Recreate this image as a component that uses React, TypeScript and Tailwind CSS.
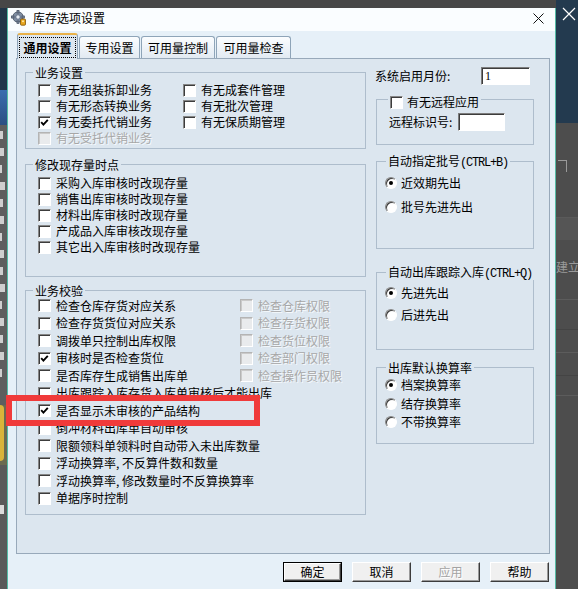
import React from 'react';

type Item = { label: React.ReactNode; key: string; checked?: boolean; disabled?: boolean };

// SimSun-style half-width comma
const Comma = () => <span className="inline-block w-[6px]">,</span>;

const BIZ_LEFT: Item[] = [
  { key: 'a1', label: '有无组装拆卸业务' },
  { key: 'a2', label: '有无形态转换业务' },
  { key: 'a3', label: '有无委托代销业务', checked: true },
  { key: 'a4', label: '有无受托代销业务', disabled: true },
];

const BIZ_RIGHT: Item[] = [
  { key: 'b1', label: '有无成套件管理' },
  { key: 'b2', label: '有无批次管理' },
  { key: 'b3', label: '有无保质期管理' },
];

const STOCK_POINTS: Item[] = [
  { key: 'c1', label: '采购入库审核时改现存量' },
  { key: 'c2', label: '销售出库审核时改现存量' },
  { key: 'c3', label: '材料出库审核时改现存量' },
  { key: 'c4', label: '产成品入库审核改现存量' },
  { key: 'c5', label: '其它出入库审核时改现存量' },
];

const CHECKS: [Item, Item | null][] = [
  [{ key: 'd1', label: '检查仓库存货对应关系' }, { key: 'e1', label: '检查仓库权限', disabled: true }],
  [{ key: 'd2', label: '检查存货货位对应关系' }, { key: 'e2', label: '检查存货权限', disabled: true }],
  [{ key: 'd3', label: '调拨单只控制出库权限' }, { key: 'e3', label: '检查货位权限', disabled: true }],
  [{ key: 'd4', label: '审核时是否检查货位', checked: true }, { key: 'e4', label: '检查部门权限', disabled: true }],
  [{ key: 'd5', label: '是否库存生成销售出库单' }, { key: 'e5', label: '检查操作员权限', disabled: true }],
  [{ key: 'd6', label: '出库跟踪入库存货入库单审核后才能出库' }, null],
  [{ key: 'd7', label: '是否显示未审核的产品结构', checked: true }, null],
  [{ key: 'd8', label: '倒冲材料出库单自动审核' }, null],
  [{ key: 'd9', label: '限额领料单领料时自动带入未出库数量' }, null],
  [{ key: 'd10', label: <>浮动换算率<Comma />不反算件数和数量</> }, null],
  [{ key: 'd11', label: <>浮动换算率<Comma />修改数量时不反算换算率</> }, null],
  [{ key: 'd12', label: '单据序时控制' }, null],
];

const Check = ({ checked = false, disabled = false }: { checked?: boolean; disabled?: boolean }) => (
  <span
    className={`flex h-[13px] w-[13px] shrink-0 items-center justify-center border border-r-white border-b-white ${
      disabled
        ? 'border-t-[#b4b4b4] border-l-[#b4b4b4] bg-[#e9ebed] shadow-[inset_1px_1px_0_#cacaca]'
        : 'border-t-[#868686] border-l-[#868686] bg-white shadow-[inset_1px_1px_0_#3c3c3c]'
    }`}
  >
    {checked && (
      <svg width="9" height="9" viewBox="0 0 9 9">
        <path d="M1.2 4.2 L3.4 6.6 L7.8 1.8" stroke="#000" strokeWidth="1.9" fill="none" />
      </svg>
    )}
  </span>
);

const Radio = ({ on = false }: { on?: boolean }) => (
  <span className="flex h-[12px] w-[12px] shrink-0 items-center justify-center rounded-full border border-t-[#868686] border-l-[#868686] border-r-white border-b-white bg-white shadow-[inset_1px_1px_0_#3c3c3c]">
    {on && <span className="h-[4px] w-[4px] rounded-full bg-black" />}
  </span>
);

const CheckRow = ({ item, h }: { item: Item; h: string }) => (
  <div className={`flex items-center gap-[5px] whitespace-nowrap ${h}`}>
    <Check checked={item.checked} disabled={item.disabled} />
    <span className={item.disabled ? 'text-[#a7a7a7] [text-shadow:1px_1px_0_#f6f9fc]' : ''}>{item.label}</span>
  </div>
);

const RadioRow = ({ label, on, h }: { label: string; on?: boolean; h: string }) => (
  <div className={`flex items-center gap-[4px] whitespace-nowrap ${h}`}>
    <Radio on={on} />
    <span>{label}</span>
  </div>
);

const Group = ({
  title,
  className,
  titleClass,
  children,
}: {
  title: React.ReactNode;
  className: string;
  titleClass: string;
  children: React.ReactNode;
}) => (
  <div className={`flex flex-col border border-[#aebdcc] ${className}`}>
    <div className={`flex h-[14px] w-fit items-center whitespace-nowrap bg-[#dce6ef] px-[2px] ${titleClass}`}>
      {title}
    </div>
    {children}
  </div>
);

const Hotkey = ({ k }: { k: string }) => (
  <span className="font-['Liberation_Mono',monospace] text-[12px] tracking-[-1.2px]">(CTRL+{k})</span>
);

const Sunken = ({ className, children }: { className: string; children?: React.ReactNode }) => (
  <div
    className={`flex items-center border border-t-[#7c7c7c] border-l-[#7c7c7c] border-r-white border-b-white bg-white shadow-[inset_1px_1px_0_#3c3c3c] ${className}`}
  >
    {children}
  </div>
);

const Btn = ({ label, def, disabled }: { label: string; def?: boolean; disabled?: boolean }) => (
  <div className={`h-[20px] w-[59px] ${def ? 'border border-black' : ''}`}>
    <div className="flex h-full w-full items-center justify-center border border-t-white border-l-white border-r-[#3c3c3c] border-b-[#3c3c3c] bg-[#f0f0f0] shadow-[inset_-1px_-1px_0_#9a9a9a]">
      <span className={disabled ? 'text-[#a3a3a3] [text-shadow:1px_1px_0_#ffffff]' : ''}>{label}</span>
    </div>
  </div>
);

const AppIcon = () => (
  <svg width="16" height="16" viewBox="0 0 16 16">
    <g fill="#7f8ea3" stroke="#3f4a5c" strokeWidth="0.7">
      <circle cx="7" cy="7" r="5.2" />
      <rect x="6" y="0.6" width="2" height="2.4" />
      <rect x="6" y="11" width="2" height="2.4" />
      <rect x="0.6" y="6" width="2.4" height="2" />
      <rect x="11" y="6" width="2.4" height="2" />
    </g>
    <circle cx="7" cy="7" r="2.2" fill="#e4ebf3" stroke="#4b5870" strokeWidth="0.7" />
    <rect x="9.5" y="9" width="5" height="6.2" rx="1" fill="#e6a51f" stroke="#7e5204" strokeWidth="0.8" />
    <rect x="11" y="10.5" width="2" height="1.6" fill="#fbe39a" />
  </svg>
);

const Tab = ({ label, w, active }: { label: string; w: string; active?: boolean }) =>
  active ? (
    <div className={`relative z-10 -mb-[1px] flex h-[26px] flex-col rounded-t-[3px] border border-b-0 border-[#8ea4b8] border-t-[2px] border-t-[#e9b24a] bg-[#dce6ef] px-[1px] pt-[2px] pb-[1px] ${w}`}>
      <div className="flex flex-1 items-center justify-center border border-dotted border-black font-bold">{label}</div>
    </div>
  ) : (
    <div className={`ml-[1px] flex h-[22px] items-center justify-center rounded-t-[3px] border border-b-0 border-[#8ea4b8] bg-gradient-to-b from-[#fbfdff] to-[#e2eaf2] ${w}`}>
      {label}
    </div>
  );

// desktop behind the dialog, left edge
const LeftStrip = () => (
  <div className="flex w-[7px] shrink-0 flex-col overflow-hidden">
    <div className="h-[8px] bg-[#474747]" />
    <div className="h-[82px] bg-[#213649]" />
    <div className="h-[35px] bg-gradient-to-b from-[#3a6db0] to-[#2b4f82]" />
    <div className="flex h-[280px] flex-col gap-[9px] bg-[#5e5e5e] pt-[6px]">
      {[3, 4, 2, 5, 3, 4, 2, 4, 3, 5, 2, 4, 3, 4, 2].map((w, i) => (
        <div key={i} className="h-[8px] bg-[#cfcfcf]" style={{ width: w }} />
      ))}
    </div>
    <div className="h-[60px] bg-[#6a6a50]">
      <div className="h-[56px] w-[4px] rounded-r-full bg-[#d9b43a]" />
    </div>
    <div className="flex-1 bg-[#5a5a5a] pt-[40px]">
      <div className="h-[9px] w-[4px] bg-[#dcdcdc]" />
    </div>
  </div>
);

// desktop behind the dialog, right edge
const RightStrip = () => (
  <div className="flex flex-1 flex-col overflow-hidden">
    <div className="h-[123px] bg-[#233a4f] pt-[7px] pl-[6px]">
      <svg width="14" height="14" viewBox="0 0 14 14">
        <path d="M1 1 L13 13 M13 1 L1 13" stroke="#ffffff" strokeWidth="1.2" />
      </svg>
    </div>
    <div className="flex flex-1 flex-col bg-[#4d4d4d] text-[12px] text-[#9a9a9a]">
      <div className="h-[37px]" />
      <div className="h-[14px] pl-[2px]">
        <div className="h-[12px] w-[9px] border-t border-r border-[#9a9a9a]" />
      </div>
      <div className="h-[44px] border-b border-[#5a5a5a]" />
      <div className="h-[22px] bg-[#555555]" />
      <div className="h-[20px]" />
      <div className="h-[14px] whitespace-nowrap">建立</div>
      <div className="h-[26px] border-b border-[#5c5c5c]" />
      <div className="h-[30px] border-b border-[#444444]" />
      <div className="h-[23px] border-b border-[#5c5c5c]" />
      <div className="h-[23px] border-b border-[#444444]" />
      <div className="h-[20px] border-b border-[#5c5c5c]" />
      <div className="flex-1" />
    </div>
  </div>
);

const Dialog = () => (
  <div className="flex flex-1 flex-col border-x border-[#55bba5] bg-[#e6f0f8]">
    {/* title bar */}
    <div className="flex h-[23px] shrink-0 items-center bg-[#fafdff] pl-[3px] pb-[3px]">
      <AppIcon />
      <span className="ml-[6px]">库存选项设置</span>
      <svg className="mr-[11px] ml-auto" width="11" height="11" viewBox="0 0 11 11">
        <path d="M0.5 0.5 L10.5 10.5 M10.5 0.5 L0.5 10.5" stroke="#111" strokeWidth="1" />
      </svg>
    </div>

    <div className="flex flex-1 flex-col pt-[2px] pr-[5px] pl-[8px]">
      {/* tabs */}
      <div className="flex h-[25px] items-end pl-[1px]">
        <Tab label="通用设置" w="w-[61px]" active />
        <Tab label="专用设置" w="w-[61px]" />
        <Tab label="可用量控制" w="w-[74px]" />
        <Tab label="可用量检查" w="w-[75px]" />
      </div>

      {/* tab page */}
      <div className="flex h-[496px] w-[534px] border border-[#98a9ba] bg-[#dce6ef]">
        {/* left column */}
        <div className="ml-[8px] flex w-[341px] flex-col">
          <Group title="业务设置" className="mt-[13px] h-[77px]" titleClass="-mt-[7px] ml-[7px]">
            <div className="mt-[2px] flex pl-[12px]">
              <div className="flex w-[145px] flex-col">
                {BIZ_LEFT.map(it => <CheckRow key={it.key} item={it} h="h-[16px]" />)}
              </div>
              <div className="flex flex-col">
                {BIZ_RIGHT.map(it => <CheckRow key={it.key} item={it} h="h-[16px]" />)}
              </div>
            </div>
          </Group>

          <Group title="修改现存量时点" className="mt-[15px] h-[113px]" titleClass="-mt-[7px] ml-[7px]">
            <div className="mt-[3px] flex flex-col pl-[12px]">
              {STOCK_POINTS.map(it => <CheckRow key={it.key} item={it} h="h-[16px]" />)}
            </div>
          </Group>

          <Group title="业务校验" className="mt-[13px] h-[225px]" titleClass="-mt-[7px] ml-[7px]">
            <div className="-mt-[1px] flex flex-col pl-[12px]">
              {CHECKS.map(([a, b]) => (
                <div key={a.key} className="flex">
                  <div className={b ? 'w-[202px]' : ''}>
                    <CheckRow item={a} h="h-[17.5px]" />
                  </div>
                  {b && <CheckRow item={b} h="h-[17.5px]" />}
                </div>
              ))}
            </div>
          </Group>
        </div>

        {/* right column */}
        <div className="ml-[9px] flex w-[159px] flex-col">
          <div className="mt-[8px] flex h-[18px] items-center whitespace-nowrap">
            <span>系统启用月份:</span>
            <Sunken className="mr-[4px] ml-auto h-[18px] w-[49px] pl-[3px]">
              <span className="font-['Liberation_Serif',serif] text-[12px]">1</span>
            </Sunken>
          </div>

          <Group
            title={
              <span className="flex items-center gap-[4px]">
                <Check />
                <span>有无远程应用</span>
              </span>
            }
            className="mt-[14px] ml-[1px] h-[46px] w-[158px]"
            titleClass="-mt-[5px] ml-[11px]"
          >
            <div className="mt-[4px] flex h-[18px] items-center pl-[12px] whitespace-nowrap">
              <span>远程标识号:</span>
              <Sunken className="ml-[6px] h-[18px] w-[47px]" />
            </div>
          </Group>

          <Group
            title={<span>自动指定批号<Hotkey k="B" /></span>}
            className="mt-[16px] ml-[1px] h-[88px] w-[158px]"
            titleClass="-mt-[7px] ml-[9px]"
          >
            <div className="mt-[2px] flex flex-col pl-[8px]">
              <RadioRow label="近效期先出" on h="h-[24px]" />
              <RadioRow label="批号先进先出" h="h-[24px]" />
            </div>
          </Group>

          <Group
            title={<span>自动出库跟踪入库<Hotkey k="Q" /></span>}
            className="mt-[23px] ml-[1px] h-[78px] w-[158px]"
            titleClass="-mt-[7px] ml-[9px]"
          >
            <div className="mt-[2px] flex flex-col pl-[8px]">
              <RadioRow label="先进先出" on h="h-[22px]" />
              <RadioRow label="后进先出" h="h-[22px]" />
            </div>
          </Group>

          <Group title="出库默认换算率" className="mt-[17px] ml-[1px] h-[77px] w-[158px]" titleClass="-mt-[7px] ml-[9px]">
            <div className="mt-[1px] flex flex-col pl-[8px]">
              <RadioRow label="档案换算率" on h="h-[18.5px]" />
              <RadioRow label="结存换算率" h="h-[18.5px]" />
              <RadioRow label="不带换算率" h="h-[18.5px]" />
            </div>
          </Group>
        </div>
      </div>

      {/* buttons */}
      <div className="mt-[8px] flex justify-end gap-[10px] pr-[1px]">
        <Btn label="确定" def />
        <Btn label="取消" />
        <Btn label="应用" disabled />
        <Btn label="帮助" />
      </div>
    </div>
  </div>
);

export default function App() {
  return (
    <div className="relative flex h-[589px] w-[578px] overflow-hidden bg-[#4a4a4a] font-['Noto_Sans_CJK_SC',sans-serif] text-[12px] leading-[14px] text-black">
      <LeftStrip />
      <div className="flex w-[549px] shrink-0 flex-col">
        <div className="h-[8px] shrink-0 bg-[#474747]" />
        <Dialog />
      </div>
      <RightStrip />

      {/* red annotation box */}
      <div className="pointer-events-none absolute top-[395px] left-[6px] h-[31px] w-[254px] border-[6px] border-[#f03a3a]" />
    </div>
  );
}
